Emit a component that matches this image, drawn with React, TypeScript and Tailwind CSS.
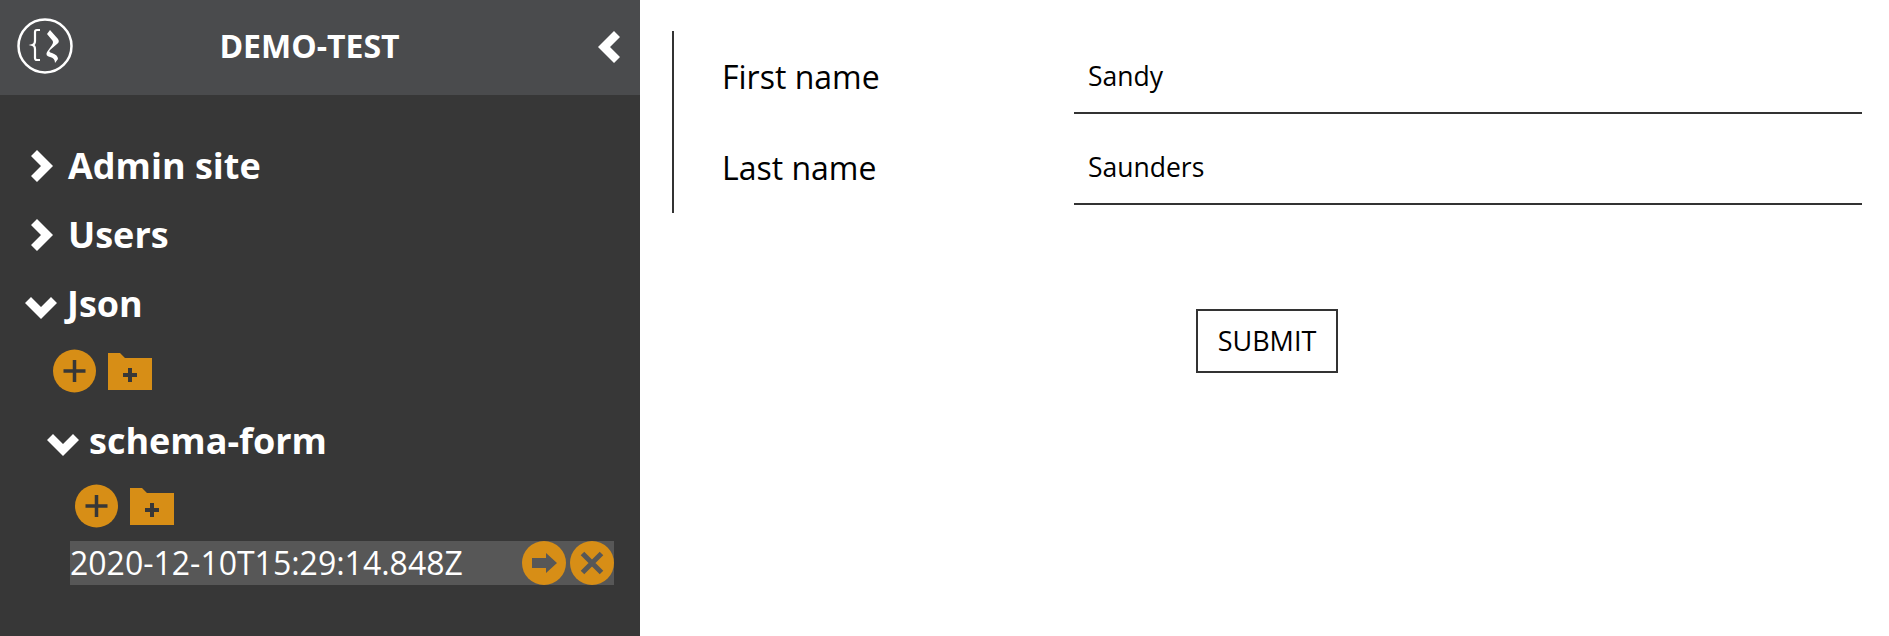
function Logo() {
  return (
    <svg viewBox="0 0 56 56" className="w-[56px] h-[56px]" fill="none" stroke="#fff">
      <circle cx="28" cy="28" r="26.500" strokeWidth="2.500" />
      <path d="M23 12h-3c-1.500 0-2 .8-2 2v9c0 2-.8 3.500-2.500 4 1.700.5 2.500 2 2.500 4v9c0 1.500.5 2 2 2h3" strokeWidth="2.200" />
      <path d="M33 12L41 21Q43 24 40 26L33 32Q31 34 35 35Q41 37 41 41L38 45Q38 40 33 39Q28 38 30 34L35 27Q37 24 35 22L30 16Z" fill="#fff" stroke="none" />
    </svg>
  );
}

function ChevronRight() {
  return (
    <svg viewBox="0 0 22 32" className="w-[22px] h-[32px] shrink-0" fill="#fff">
      <path d="M6 0L22 16L6 32L0 26L10 16L0 6z" />
    </svg>
  );
}

function ChevronDown() {
  return (
    <svg viewBox="0 0 32 22" className="w-[32px] h-[22px] mt-[8px] shrink-0" fill="#fff">
      <path d="M0 6L6 0L16 10L26 0L32 6L16 22z" />
    </svg>
  );
}

function AddIcon() {
  return (
    <svg viewBox="0 0 43 44" className="w-[43px] h-[44px]">
      <circle cx="21.500" cy="22" r="21.500" fill="#d78e16" />
      <path d="M21.500 11v22M10.500 22h22" stroke="#373737" strokeWidth="3.500" />
    </svg>
  );
}

function FolderIcon() {
  return (
    <svg viewBox="0 0 44 37" className="w-[44px] h-[37px]">
      <path d="M0 0h12l5 5h27v32H0z" fill="#d78e16" />
      <path d="M22 15v14M15 22h14" stroke="#373737" strokeWidth="4" />
    </svg>
  );
}

function Actions({ className }: { className: string }) {
  return (
    <div className={"flex items-center gap-[12px] " + className}>
      <AddIcon />
      <FolderIcon />
    </div>
  );
}

function Row({ open, label, className }: { open?: boolean; label: string; className: string }) {
  return (
    <div className={"flex items-center h-[69px] text-[36px] font-bold text-white " + className}>
      {open ? <ChevronDown /> : <ChevronRight />}
      <span>{label}</span>
    </div>
  );
}

function Field({ label, value }: { label: string; value: string }) {
  return (
    <div className="flex items-stretch h-[83px]">
      <label className="flex items-center w-[400px] pl-[48px] pt-[9px] text-[32px] text-black">{label}</label>
      <input
        readOnly
        value={value}
        className="flex-1 min-w-0 px-[14px] pt-[10px] text-[26.500px] text-black border-b-2 border-[#333] outline-none"
      />
    </div>
  );
}

export default function App() {
  return (
    <div className="flex h-screen bg-white font-['Open_Sans',sans-serif] overflow-hidden">
      <aside className="w-[640px] shrink-0 bg-[#373737]">
        <header className="relative flex items-center justify-center h-[95px] bg-[#4a4b4d] pr-[21px] pb-[4px]">
          <div className="absolute left-[17px] top-[18px]">
            <Logo />
          </div>
          <h1 className="text-[32px] font-bold text-white">DEMO-TEST</h1>
          <svg viewBox="0 0 22 32" className="absolute left-[598px] top-[31px] w-[22px] h-[32px]" fill="#fff">
            <path d="M16 0L22 6L12 16L22 26L16 32L0 16z" />
          </svg>
        </header>
        <nav className="pt-[36px]">
          <Row label="Admin site" className="pl-[31px] gap-[15px]" />
          <Row label="Users" className="pl-[31px] gap-[15px]" />
          <Row open label="Json" className="pl-[25px] gap-[10px]" />
          <Actions className="pl-[53px] h-[66px] mb-[2px]" />
          <Row open label="schema-form" className="pl-[47px] gap-[10px]" />
          <Actions className="pl-[75px] h-[62px]" />
          <div className="flex items-center justify-between ml-[70px] mt-[4px] w-[544px] h-[44px] bg-[#575757]">
            <span className="text-[32px] text-white">2020-12-10T15:29:14.848Z</span>
            <div className="flex gap-[4px]">
              <svg viewBox="0 0 44 44" className="w-[44px] h-[44px]">
                <circle cx="22" cy="22" r="22" fill="#d78e16" />
                <path d="M10 17h14v-5l11 10-11 10v-5H10z" fill="#575757" />
              </svg>
              <svg viewBox="0 0 44 44" className="w-[44px] h-[44px]">
                <circle cx="22" cy="22" r="22" fill="#d78e16" />
                <path d="M12.500 12.500l19 19M31.500 12.500l-19 19" stroke="#575757" strokeWidth="5" />
              </svg>
            </div>
          </div>
        </nav>
      </aside>
      <main className="flex-1 pl-[32px] pr-[27px] pt-[31px]">
        <div className="flex flex-col gap-[8px] border-l-2 border-[#333] h-[182px]">
          <Field label="First name" value="Sandy" />
          <Field label="Last name" value="Saunders" />
        </div>
        <button className="block ml-[524px] mt-[96px] w-[142px] h-[64px] border-2 border-[#333] text-[27px] text-black">
          SUBMIT
        </button>
      </main>
    </div>
  );
}
